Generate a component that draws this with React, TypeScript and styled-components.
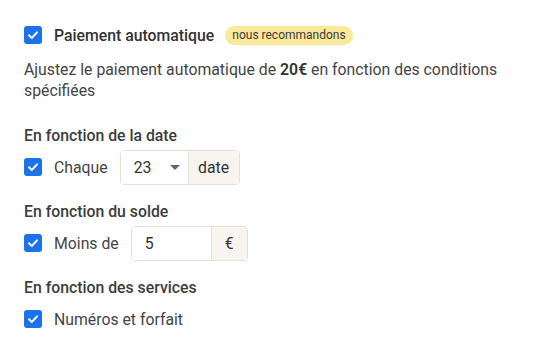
import React from "react";
import styled, { createGlobalStyle } from "styled-components";

const GlobalStyle = createGlobalStyle`
  body {
    margin: 0;
    background: #ffffff;
    font-family: Roboto, "Noto Sans", sans-serif;
    color: #333333;
  }
`;

const Page = styled.div`
  padding: 26px 24px 0 24px;
  display: flex;
  flex-direction: column;
`;

const Row = styled.div`
  display: flex;
  align-items: center;
  gap: 12px;
  height: 36px;
  margin-top: 2px;
`;

const TitleRow = styled.div`
  display: flex;
  align-items: center;
  height: 18px;
`;

const Box = styled.span`
  width: 18px;
  height: 18px;
  border-radius: 3px;
  background: #1a73e8;
  display: inline-flex;
  align-items: center;
  justify-content: center;
  flex-shrink: 0;
`;

const Title = styled.span`
  margin-left: 12px;
  font-size: 15.8px;
  font-weight: 500;
  color: #333333;
`;

const Badge = styled.span`
  margin-left: 11px;
  background: #fbe99b;
  color: #3a3a3a;
  font-size: 12px;
  height: 19px;
  line-height: 19px;
  padding: 0 7px;
  border-radius: 10px;
`;

const Description = styled.p`
  margin: 15px 0 0 0;
  font-size: 15.8px;
  line-height: 21px;
  color: #444444;
  max-width: 490px;

  b {
    font-weight: 600;
    color: #333333;
  }
`;

const Heading = styled.div<{ $top: number }>`
  margin-top: ${(p) => p.$top}px;
  font-size: 15.8px;
  font-weight: 500;
  line-height: 22px;
  color: #3c3c3c;
`;

const Label = styled.span`
  font-size: 15.8px;
  color: #444444;
`;

const Group = styled.div`
  display: flex;
  height: 35px;
  border: 1px solid #e8e0d4;
  border-radius: 4px;
  box-sizing: border-box;
  overflow: hidden;
`;

const Field = styled.div<{ $w: number }>`
  width: ${(p) => p.$w}px;
  display: flex;
  align-items: center;
  justify-content: space-between;
  padding: 0 8px 0 13px;
  box-sizing: border-box;
  font-size: 15.8px;
  color: #333333;
  background: #ffffff;
`;

const Addon = styled.div<{ $w: number }>`
  width: ${(p) => p.$w}px;
  display: flex;
  align-items: center;
  justify-content: center;
  border-left: 1px solid #e8e0d4;
  background: #f8f5f0;
  font-size: 15.8px;
  color: #333333;
`;

const Caret = styled.span`
  width: 0;
  height: 0;
  border-left: 5px solid transparent;
  border-right: 5px solid transparent;
  border-top: 5px solid #666666;
`;

const Check = () => (
  <Box>
    <svg width="12" height="12" viewBox="0 0 12 12">
      <path d="M2 6.3 L4.8 9 L10 3.3" fill="none" stroke="#fff" strokeWidth="1.9" strokeLinecap="round" strokeLinejoin="round" />
    </svg>
  </Box>
);

export default function App() {
  return (
    <>
      <GlobalStyle />
      <Page>
        <TitleRow>
          <Check />
          <Title>Paiement automatique</Title>
          <Badge>nous recommandons</Badge>
        </TitleRow>
        <Description>
          Ajustez le paiement automatique de <b>20€</b> en fonction des conditions spécifiées
        </Description>

        <Heading $top={24}>En fonction de la date</Heading>
        <Row>
          <Check />
          <Label>Chaque</Label>
          <Group>
            <Field $w={67}>
              23
              <Caret />
            </Field>
            <Addon $w={50}>date</Addon>
          </Group>
        </Row>

        <Heading $top={16}>En fonction du solde</Heading>
        <Row>
          <Check />
          <Label>Moins de</Label>
          <Group>
            <Field $w={79}>5</Field>
            <Addon $w={35}>€</Addon>
          </Group>
        </Row>

        <Heading $top={16}>En fonction des services</Heading>
        <Row>
          <Check />
          <Label>Numéros et forfait</Label>
        </Row>
      </Page>
    </>
  );
}
